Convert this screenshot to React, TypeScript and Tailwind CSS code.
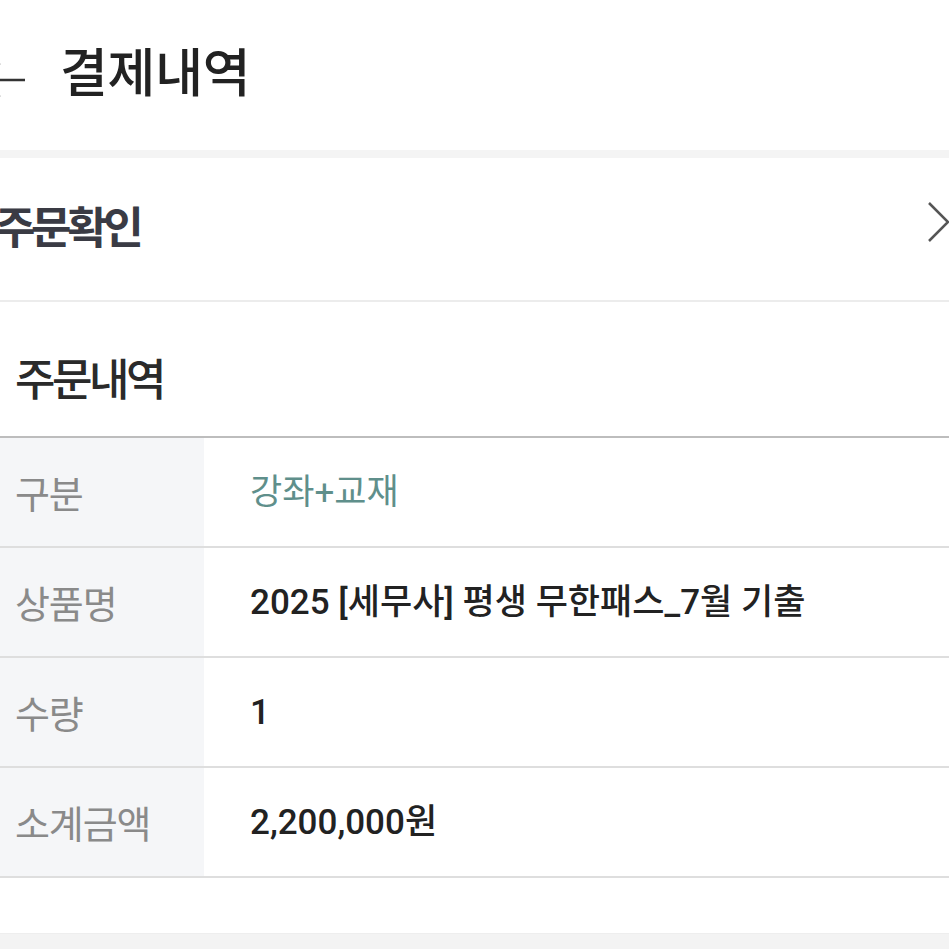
import React from "react";

const font = { fontFamily: 'Roboto, "Noto Sans CJK KR", sans-serif' };

const rows: { label: string; value: string; teal?: boolean }[] = [
  { label: "구분", value: "강좌+교재", teal: true },
  { label: "상품명", value: "2025 [세무사] 평생 무한패스_7월 기출" },
  { label: "수량", value: "1" },
  { label: "소계금액", value: "2,200,000원" },
];

export default function App() {
  return (
    <div className="w-[949px] h-[949px] overflow-hidden bg-white" style={font}>
      {/* Header */}
      <div className="h-[150px] flex items-center">
        <svg width="44" height="40" viewBox="0 0 44 40" className="ml-[-19px] mt-[10px] shrink-0">
          <path d="M2 20 H44 M2 20 L18 4 M2 20 L18 36" stroke="#333" strokeWidth="2.5" fill="none" strokeLinecap="round" />
        </svg>
        <h1 className="ml-[35px] text-[52px] font-medium text-[#222] leading-none tracking-[-0.005em]">결제내역</h1>
      </div>
      <div className="h-[8px] bg-[#f4f4f4]" />

      {/* 주문확인 */}
      <div className="h-[144px] flex items-center justify-between border-b-2 border-[#ececec]">
        <span className="ml-[-5px] text-[44px] font-bold text-[#3a3b44] leading-none tracking-[-0.1em]">주문확인</span>
        <svg width="24" height="42" viewBox="0 0 24 42" className="mb-[14px] shrink-0">
          <path d="M4 2 L23 21 L4 40" stroke="#555" strokeWidth="2.5" fill="none" />
        </svg>
      </div>

      {/* 주문내역 */}
      <div className="h-[136px] flex items-center pt-[24px] border-b-2 border-[#bdbdbd]">
        <span className="ml-[15px] text-[44px] font-medium text-[#2a2a2a] leading-none tracking-[-0.08em]">주문내역</span>
      </div>

      {/* Table */}
      <div className="flex flex-col">
        {rows.map((r) => (
          <div key={r.label} className="flex h-[110px] border-b-2 border-[#dedede]">
            <div className="w-[204px] shrink-0 bg-[#f5f6f8] flex items-center pl-[15px] pt-[6px]">
              <span className="text-[38px] text-[#8a8a8a] leading-none tracking-[-0.03em]">{r.label}</span>
            </div>
            <div className="flex-1 flex items-center pl-[46px]">
              <span
                className={
                  r.teal
                    ? "text-[35px] text-[#5f8f8b] leading-none"
                    : "text-[35px] font-medium text-[#222] leading-none"
                }
              >
                {r.value}
              </span>
            </div>
          </div>
        ))}
      </div>

      <div className="h-[56px] border-b border-[#eeeeee]" />
      <div className="h-[20px] bg-[#f3f3f3]" />
    </div>
  );
}
